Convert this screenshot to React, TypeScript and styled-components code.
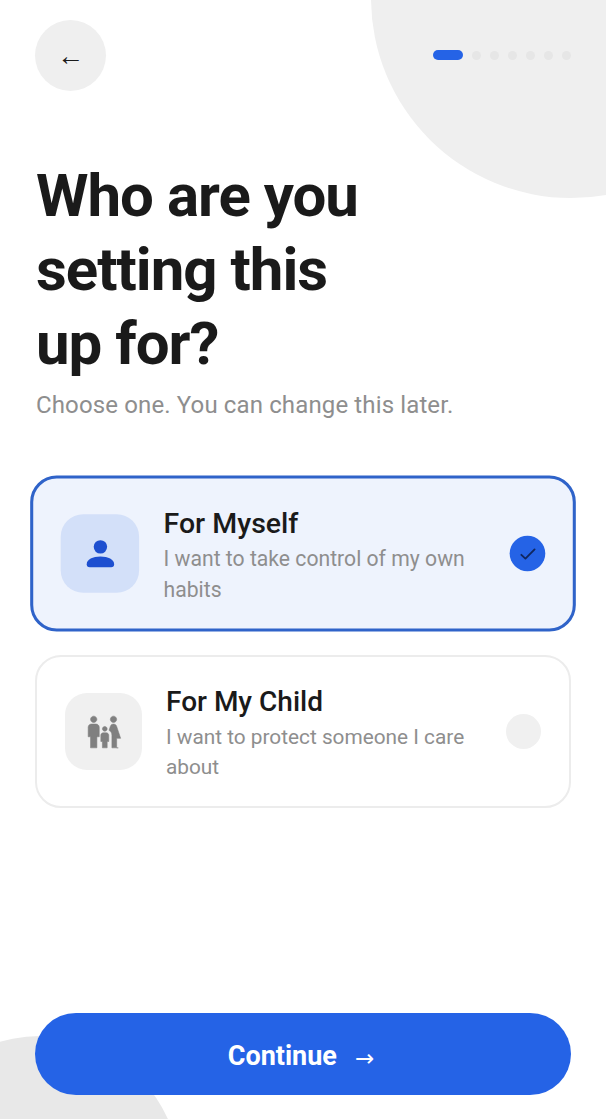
import React from "react";
import styled, { createGlobalStyle } from "styled-components";

const Global = createGlobalStyle`
  html, body { margin: 0; padding: 0; background: #fff; }
  * { box-sizing: border-box; }
`;

const Page = styled.div`
  position: relative;
  width: 606px;
  height: 1119px;
  overflow: hidden;
  background: #fff;
  padding: 20px 35px 24px;
  display: flex;
  flex-direction: column;
  font-family: Roboto, "Liberation Sans", sans-serif;
`;

const BlobTop = styled.div`
  position: absolute;
  left: 371px;
  top: -202px;
  width: 400px;
  height: 400px;
  border-radius: 50%;
  background: #efefef;
`;

const BlobBottom = styled.div`
  position: absolute;
  left: -100px;
  top: 1036px;
  width: 280px;
  height: 280px;
  border-radius: 50%;
  background: #e8e8e8;
`;

const Header = styled.header`
  position: relative;
  display: flex;
  justify-content: space-between;
  align-items: center;
  height: 70px;
`;

const BackButton = styled.button`
  width: 71px;
  height: 71px;
  border: 0;
  padding: 3px 0 0;
  border-radius: 50%;
  background: #efefef;
  color: #1a1a1a;
  font-family: "Liberation Sans", sans-serif;
  font-size: 27px;
  line-height: 1;
  display: flex;
  align-items: center;
  justify-content: center;
`;

const Progress = styled.div`
  display: flex;
  align-items: center;
  gap: 9px;
`;

const ActiveStep = styled.span`
  width: 30px;
  height: 10px;
  border-radius: 5px;
  background: #2563e6;
`;

const Step = styled.span`
  width: 9px;
  height: 9px;
  border-radius: 50%;
  background: #e6e6e6;
`;

const Title = styled.h1`
  position: relative;
  margin: 69px 0 0 1px;
  font-size: 60px;
  line-height: 74px;
  font-weight: 700;
  letter-spacing: -1px;
  color: #1a1a1a;
`;

const Subtitle = styled.p`
  margin: 8px 0 0 1px;
  font-size: 24px;
  line-height: 32px;
  letter-spacing: 0.13px;
  color: #8e8e8e;
`;

const Options = styled.div`
  display: flex;
  flex-direction: column;
  gap: 25px;
  margin-top: 56px;
`;

const Card = styled.div<{ $selected?: boolean }>`
  display: flex;
  align-items: center;
  gap: 24px;
  height: 153px;
  padding: ${(p) => (p.$selected ? "0 27px" : "0 28px")};
  border-radius: 26px;
  border: ${(p) => (p.$selected ? "3px solid #2f63c9" : "2px solid #ececec")};
  background: ${(p) => (p.$selected ? "#eef3fd" : "#fff")};
  transform: ${(p) => (p.$selected ? "scale(1.018, 1.02)" : "none")};
`;

const IconBox = styled.div<{ $selected?: boolean }>`
  flex: none;
  width: 77px;
  height: 77px;
  border-radius: 22px;
  display: flex;
  align-items: center;
  justify-content: center;
  background: ${(p) => (p.$selected ? "#d3e0f9" : "#f0f0f0")};
  color: ${(p) => (p.$selected ? "#1d4fd0" : "#808080")};
`;

const CardText = styled.div`
  flex: 1;
  min-width: 0;
  padding-top: 4px;
`;

const CardTitle = styled.div`
  font-size: 28px;
  line-height: 34px;
  font-weight: 500;
  color: #1a1a1a;
`;

const CardDesc = styled.div`
  margin-top: 3px;
  font-size: 20.8px;
  line-height: 30px;
  color: #8e8e8e;
`;

const Radio = styled.div<{ $selected?: boolean }>`
  flex: none;
  width: 35px;
  height: 35px;
  border-radius: 50%;
  display: flex;
  align-items: center;
  justify-content: center;
  background: ${(p) => (p.$selected ? "#2563e6" : "#f0f0f0")};
`;

const Spacer = styled.div`
  flex: 1;
`;

const ContinueButton = styled.button`
  position: relative;
  height: 82px;
  width: 536px;
  border: 0;
  padding: 4px 4px 0 0;
  border-radius: 41px;
  background: #2563e6;
  color: #fff;
  font-family: Roboto, "DejaVu Sans", sans-serif;
  font-size: 27px;
  font-weight: 700;
  display: flex;
  align-items: center;
  justify-content: center;
  gap: 18px;
`;

const ButtonArrow = styled.span`
  font-weight: 400;
  font-size: 23px;
  padding-top: 4px;
`;

const PersonIcon = () => (
  <svg width="28" height="28" viewBox="0 0 28 28" fill="currentColor">
    <circle cx="14" cy="7" r="6.6" />
    <path d="M.5 24c0-4.5 6-7.5 13.5-7.5s13.5 3 13.5 7.5c0 2-1 3-3 3H3.5c-2 0-3-1-3-3z" />
  </svg>
);

const FamilyIcon = () => (
  <svg width="38" height="38" viewBox="0 0 24 24" fill="currentColor" stroke="currentColor" strokeWidth="0.35">
    <path d="M16 4c0-1.11.89-2 2-2s2 .89 2 2-.89 2-2 2-2-.89-2-2zm4 18v-6h2.5l-2.54-7.63C19.68 7.55 18.92 7 18.06 7h-.12c-.86 0-1.63.55-1.9 1.37l-.86 2.58c1.08.6 1.82 1.73 1.82 3.05v8h4zm-7.5-10.5c.83 0 1.5-.67 1.5-1.5s-.67-1.5-1.5-1.5S11 9.17 11 10s.67 1.5 1.5 1.5zM5.5 6c1.11 0 2-.89 2-2s-.89-2-2-2-2 .89-2 2 .89 2 2 2zm2 16v-7H9V9c0-1.1-.9-2-2-2H4c-1.1 0-2 .9-2 2v6h1.5v7h4zm6.5 0v-4h1v-4c0-.82-.68-1.5-1.5-1.5h-2c-.82 0-1.5.68-1.5 1.5v4h1v4h3z" />
  </svg>
);

const CheckIcon = () => (
  <svg width="18" height="18" viewBox="0 0 18 18" fill="none" stroke="#10265e" strokeWidth="1.8" strokeLinecap="round" strokeLinejoin="round">
    <path d="M2.5 9.8l4 3.7L15.5 4.5" />
  </svg>
);

export default function App() {
  return (
    <Page>
      <Global />
      <BlobTop />
      <BlobBottom />
      <Header>
        <BackButton>←</BackButton>
        <Progress>
          <ActiveStep />
          <Step /><Step /><Step /><Step /><Step /><Step />
        </Progress>
      </Header>
      <Title>Who are you<br />setting this<br />up for?</Title>
      <Subtitle>Choose one. You can change this later.</Subtitle>
      <Options>
        <Card $selected>
          <IconBox $selected><PersonIcon /></IconBox>
          <CardText>
            <CardTitle>For Myself</CardTitle>
            <CardDesc>I want to take control of my own habits</CardDesc>
          </CardText>
          <Radio $selected><CheckIcon /></Radio>
        </Card>
        <Card>
          <IconBox><FamilyIcon /></IconBox>
          <CardText>
            <CardTitle>For My Child</CardTitle>
            <CardDesc>I want to protect someone I care about</CardDesc>
          </CardText>
          <Radio />
        </Card>
      </Options>
      <Spacer />
      <ContinueButton>Continue <ButtonArrow>→</ButtonArrow></ContinueButton>
    </Page>
  );
}
